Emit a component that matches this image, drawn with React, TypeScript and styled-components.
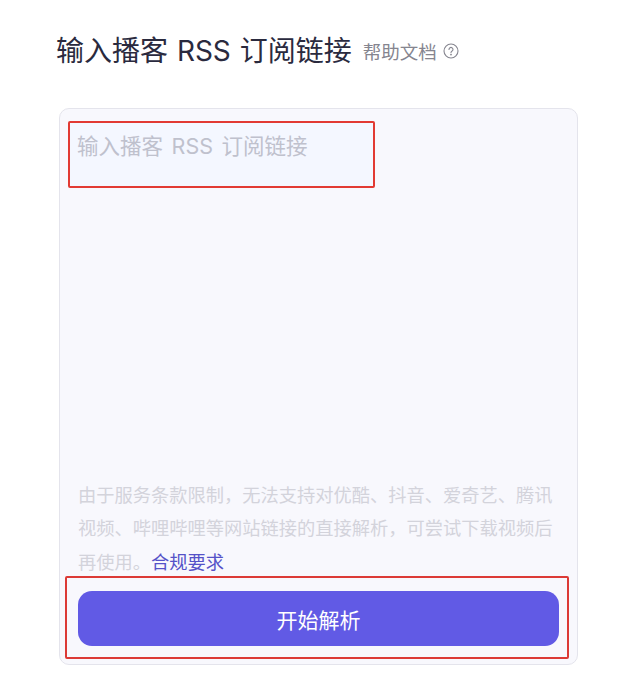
import React from 'react';
import styled, { createGlobalStyle } from 'styled-components';

const GlobalStyle = createGlobalStyle`
  html, body {
    margin: 0;
    padding: 0;
    background: #fff;
  }
  body {
    font-family: 'Inter', 'Noto Sans CJK SC', sans-serif;
  }
`;

const HelpIcon = () => (
  <svg width="16" height="16" viewBox="0 0 16 16" fill="none" stroke="#85858f" strokeWidth="1.1" strokeLinecap="round">
    <circle cx="8" cy="8" r="7" />
    <path d="M6 6.4a2 2 0 1 1 3.1 1.7c-.7.4-1.1.8-1.1 1.5" />
    <circle cx="8" cy="11.6" r="0.35" fill="#85858f" />
  </svg>
);

export default function App() {
  return (
    <>
      <GlobalStyle />
      <Page>
        <Header>
          <Title>输入播客 RSS 订阅链接</Title>
          <HelpLink>
            帮助文档
            <HelpIcon />
          </HelpLink>
        </Header>
        <Card>
          <InputArea>
            <InputMark />
            <Placeholder>输入播客 RSS 订阅链接</Placeholder>
          </InputArea>
          <Notice>
            由于服务条款限制，无法支持对优酷、抖音、爱奇艺、腾讯视频、哔哩哔哩等网站链接的直接解析，可尝试下载视频后再使用。
            <ComplianceLink>合规要求</ComplianceLink>
          </Notice>
          <ActionArea>
            <StartButton>开始解析</StartButton>
            <ActionMark />
          </ActionArea>
        </Card>
      </Page>
    </>
  );
}

const Page = styled.div`
  width: 624px;
  height: 675px;
  box-sizing: border-box;
  padding: 31px 46px 0 59px;
  overflow: hidden;
`;

const Header = styled.div`
  display: flex;
  align-items: center;
  height: 40px;
  margin-left: -3px;
  gap: 11px;
`;

const Title = styled.h1`
  margin: 0;
  font-size: 28px;
  font-weight: 400;
  line-height: 40px;
  color: #2a2a3e;
  white-space: nowrap;
  word-spacing: 1px;
`;

const HelpLink = styled.span`
  display: flex;
  align-items: center;
  gap: 6px;
  font-size: 18.5px;
  color: #85858f;
  white-space: nowrap;
`;

const Card = styled.div`
  margin-top: 37px;
  height: 557px;
  box-sizing: border-box;
  border: 1px solid #e4e4ec;
  border-radius: 10px;
  background: #f8f8fd;
  display: flex;
  flex-direction: column;
  padding: 0 18px;
`;

const InputArea = styled.div`
  position: relative;
  flex: 1;
  padding-top: 21px;
`;

const Placeholder = styled.div`
  position: relative;
  margin-left: -1px;
  font-size: 21.5px;
  line-height: 32px;
  color: #bfc1cd;
  white-space: nowrap;
  word-spacing: 2.5px;
`;

const InputMark = styled.div`
  position: absolute;
  left: -10px;
  top: 12px;
  width: 307px;
  height: 67px;
  box-sizing: border-box;
  border: 2px solid #e23a33;
  border-radius: 2px;
  background: #f4f7ff;
`;

const Notice = styled.p`
  margin: 0;
  font-size: 18.25px;
  line-height: 33.5px;
  color: #d3d3db;
`;

const ComplianceLink = styled.span`
  color: #5552c8;
`;

const ActionArea = styled.div`
  position: relative;
  padding: 12px 0 18px;
`;

const StartButton = styled.button`
  display: block;
  width: 100%;
  height: 55px;
  border: none;
  border-radius: 14px;
  background: #615ae5;
  color: #fff;
  font-family: inherit;
  font-size: 21px;
`;

const ActionMark = styled.div`
  position: absolute;
  left: -13px;
  right: -10px;
  top: -3px;
  bottom: 5px;
  border: 2px solid #dc3a36;
  border-radius: 2px;
  pointer-events: none;
`;
